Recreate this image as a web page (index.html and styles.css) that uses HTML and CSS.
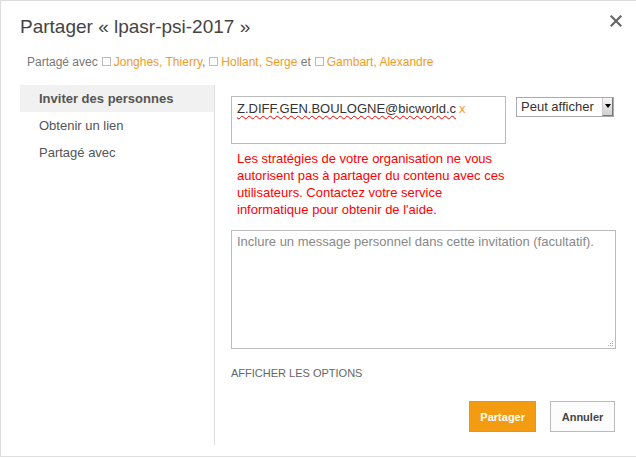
FILE: index.html
```html
<!DOCTYPE html>
<html lang="fr">
<head>
<meta charset="utf-8">
<title>Partager</title>
<link rel="stylesheet" href="styles.css">
</head>
<body>
<div class="dialog">
  <div class="header">
    <h1 class="title">Partager « lpasr-psi-2017 »</h1>
    <button class="close" aria-label="Fermer">
      <svg width="12" height="12" viewBox="0 0 12 12"><path d="M1.5 1.5 L10.5 10.5 M10.5 1.5 L1.5 10.5" stroke="#666" stroke-width="2.2" stroke-linecap="square"/></svg>
    </button>
  </div>
  <div class="shared">Partagé avec<span class="cb"></span><a class="name">Jonghes, Thierry</a>,<span class="cb"></span><a class="name">Hollant, Serge</a> et<span class="cb"></span><a class="name">Gambart, Alexandre</a></div>
  <div class="body">
    <nav class="nav">
      <div class="nav-item active">Inviter des personnes</div>
      <div class="nav-item">Obtenir un lien</div>
      <div class="nav-item">Partagé avec</div>
    </nav>
    <div class="content">
      <div class="invite-row">
        <div class="recipients"><span class="addr">Z.DIFF.GEN.BOULOGNE@bicworld.c</span><span class="remove">x</span></div>
        <div class="select"><span class="select-label">Peut afficher</span><span class="arrow"></span></div>
      </div>
      <p class="error">Les stratégies de votre organisation ne vous autorisent pas à partager du contenu avec ces utilisateurs. Contactez votre service informatique pour obtenir de l'aide.</p>
      <div class="message">Inclure un message personnel dans cette invitation (facultatif).
        <svg class="grip" width="7" height="7" viewBox="0 0 7 7"><g fill="#aaa"><rect x="5" y="1" width="1" height="1"/><rect x="3" y="3" width="1" height="1"/><rect x="5" y="3" width="1" height="1"/><rect x="1" y="5" width="1" height="1"/><rect x="3" y="5" width="1" height="1"/><rect x="5" y="5" width="1" height="1"/></g></svg>
      </div>
      <div class="options">AFFICHER LES OPTIONS</div>
      <div class="actions">
        <button class="btn primary">Partager</button>
        <button class="btn secondary">Annuler</button>
      </div>
    </div>
  </div>
</div>
</body>
</html>
```
FILE: styles.css
```css
html, body {
  margin: 0;
  padding: 0;
  background: #fff;
}
body {
  font-family: "Liberation Sans", Arial, sans-serif;
  overflow: hidden;
}
.dialog {
  box-sizing: border-box;
  width: 637px;
  height: 457px;
  border: 1px solid #dcdcdc;
  display: flex;
  flex-direction: column;
  padding-bottom: 11px;
}
.header {
  display: flex;
  justify-content: space-between;
  align-items: flex-start;
  padding: 14px 14px 0 19px;
}
.title {
  margin: 0;
  font-size: 19px;
  line-height: 24px;
  font-weight: normal;
  color: #444;
}
.close {
  border: 0;
  background: none;
  padding: 0;
  margin-top: 0;
  width: 12px;
  height: 12px;
  display: block;
}
.close svg { display: block; }
.shared {
  margin-top: 16px;
  padding-left: 26px;
  font-size: 12px;
  line-height: 14px;
  color: #777;
}
.cb {
  display: inline-block;
  box-sizing: border-box;
  width: 9px;
  height: 9px;
  border: 1px solid #bbb;
  margin: 0 3px 0 4px;
  vertical-align: baseline;
}
.name {
  color: #f29b1f;
}
.body {
  flex: 1;
  margin-top: 16px;
  display: flex;
  padding-left: 19px;
}
.nav {
  width: 194px;
  border-right: 1px solid #ddd;
}
.nav-item {
  height: 27px;
  line-height: 27px;
  padding-left: 19px;
  font-size: 13px;
  color: #555;
}
.nav-item.active {
  background: #f1f1f1;
  font-weight: bold;
}
.content {
  flex: 1;
  padding: 11px 20px 0 16px;
}
.invite-row {
  display: flex;
  align-items: flex-start;
  gap: 10px;
}
.recipients {
  box-sizing: border-box;
  width: 275px;
  height: 48px;
  border: 1px solid #bbb;
  padding: 4px 5px;
  font-size: 13px;
  line-height: 16px;
  color: #333;
  white-space: nowrap;
}
.addr {
  text-decoration: underline wavy #e00;
  text-decoration-thickness: 1px;
  text-underline-offset: 2px;
}
.remove {
  color: #f29b1f;
  margin-left: 3px;
}
.select {
  box-sizing: border-box;
  margin-top: 1px;
  width: 98px;
  height: 20px;
  border: 1px solid #aaa;
  display: flex;
  justify-content: space-between;
  font-size: 13px;
  line-height: 18px;
  color: #333;
  padding-left: 4px;
}
.arrow {
  box-sizing: border-box;
  width: 11px;
  height: 18px;
  background: linear-gradient(#f6f6f6, #d0d0d0);
  border-left: 1px solid #ccc;
  border-right: 1px solid #777;
  border-bottom: 1px solid #777;
  display: flex;
  align-items: center;
  justify-content: center;
}
.arrow::after {
  content: "";
  display: block;
  width: 0;
  height: 0;
  border-left: 3px solid transparent;
  border-right: 3px solid transparent;
  border-top: 4px solid #000;
  margin-top: -2px;
}
.error {
  margin: 6px 0 0;
  padding-left: 6px;
  width: 276px;
  font-size: 13px;
  line-height: 17px;
  color: #f00;
}
.message {
  position: relative;
  box-sizing: border-box;
  margin-top: 12px;
  height: 119px;
  border: 1px solid #bbb;
  padding: 3px 5px;
  font-size: 13px;
  line-height: 16px;
  color: #888;
}
.grip {
  position: absolute;
  right: 1px;
  bottom: 1px;
}
.options {
  margin-top: 18px;
  font-size: 11px;
  line-height: 13px;
  color: #666;
}
.actions {
  margin-top: 21px;
  display: flex;
  justify-content: flex-end;
  gap: 14px;
  padding-right: 1px;
}
.btn {
  box-sizing: border-box;
  height: 31px;
  padding: 0 10px;
  font-family: "Liberation Sans", Arial, sans-serif;
  font-size: 11px;
  font-weight: bold;
  border: 1px solid #bbb;
}
.primary {
  min-width: 66px;
  background: #f39c12;
  border-color: #f0950a;
  color: #fff;
}
.secondary {
  min-width: 65px;
  background: #fcfcfc;
  color: #444;
}
```
